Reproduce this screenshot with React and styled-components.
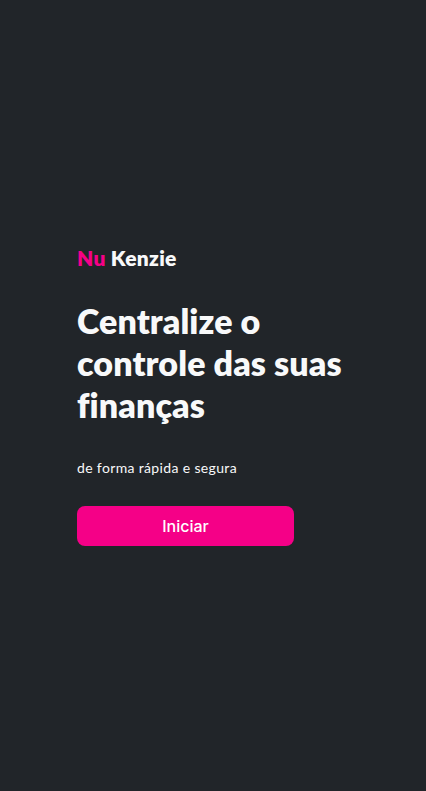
import React from 'react';
import styled, { createGlobalStyle } from 'styled-components';

const GlobalStyle = createGlobalStyle`
  * {
    margin: 0;
    padding: 0;
    box-sizing: border-box;
  }
  body {
    background: #212529;
    font-family: Lato, 'Noto Sans', sans-serif;
  }
`;

const Page = styled.main`
  min-height: 100vh;
  display: flex;
  align-items: center;
  justify-content: center;
`;

const Content = styled.section`
  width: 272px;
  display: flex;
  flex-direction: column;
  align-items: flex-start;
`;

const Logo = styled.h1`
  font-size: 21px;
  font-weight: 800;
  color: #f8f9fa;
  line-height: 24px;
  letter-spacing: 0.3px;
`;

const Nu = styled.span`
  color: #f50087;
`;

const Title = styled.h2`
  margin-top: 30px;
  font-size: 34px;
  line-height: 42px;
  font-weight: 800;
  color: #f8f9fa;
  letter-spacing: 0.1px;
`;

const Subtitle = styled.p`
  margin-top: 32px;
  font-size: 14px;
  line-height: 20px;
  color: #f8f9fa;
  letter-spacing: 0.35px;
`;

const StartBtn = styled.button`
  margin-top: 28px;
  width: 217px;
  height: 40px;
  border: none;
  border-radius: 8px;
  background: #f50087;
  color: #ffffff;
  font-family: Inter, 'Noto Sans', sans-serif;
  font-size: 16px;
  font-weight: 500;
  cursor: pointer;
`;

function App() {
  return (
    <>
      <GlobalStyle />
      <Page>
        <Content>
          <Logo>
            <Nu>Nu</Nu> Kenzie
          </Logo>
          <Title>Centralize o controle das suas finanças</Title>
          <Subtitle>de forma rápida e segura</Subtitle>
          <StartBtn>Iniciar</StartBtn>
        </Content>
      </Page>
    </>
  );
}

export default App;
